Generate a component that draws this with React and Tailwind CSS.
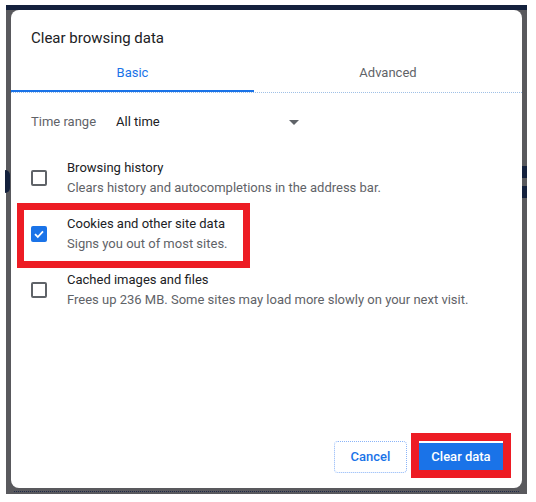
import React from "react";

function Checkbox({ checked }) {
  if (checked) {
    return (
      <div className="w-[16px] h-[16px] rounded-[2px] bg-[#1a73e8] flex items-center justify-center shrink-0">
        <svg width="12" height="12" viewBox="0 0 12 12">
          <path d="M2 6.2 L4.8 9 L10 3.4" fill="none" stroke="white" strokeWidth="1.8" />
        </svg>
      </div>
    );
  }
  return <div className="w-[16px] h-[16px] rounded-[2px] border-2 border-[#5f6368] shrink-0" />;
}

function Row({ checked, title, sub }) {
  return (
    <div className="flex items-center h-[40px] pl-[20px]">
      <Checkbox checked={checked} />
      <div className="ml-[20px] text-[13px] leading-[20px]">
        <div className="text-[#202124]">{title}</div>
        <div className="text-[#5f6368]">{sub}</div>
      </div>
    </div>
  );
}

export default function App() {
  return (
    <div className="w-[536px] h-[502px] bg-white pt-[5px] pl-[6px] font-['Roboto',sans-serif] overflow-hidden">
      <div className="relative w-[521px] h-[489px] bg-[#59595d] border-t-[5px] border-[#14213d] pl-[5px]">
        <div className="absolute left-[-1px] top-[160px] w-[5px] h-[23px] rounded-r-full bg-[#14213d]" />
        <div className="absolute right-0 top-[156px] w-[5px] h-[12px] bg-[#14213d]" />
        <div className="absolute right-0 top-[176px] w-[5px] h-[12px] bg-[#14213d]" />
        <div className="absolute left-[8px] right-[8px] top-[481px] border-t border-dotted border-[#1e2a48]" />
        <div className="relative w-[511px] h-[478px] bg-white rounded-[8px] flex flex-col">
          <div className="pl-[20px] pt-[18px] text-[15px] leading-[20px] text-[#202124]">Clear browsing data</div>
          <div className="flex border-b border-dotted border-[#9fc0e6]">
            <div className="w-[243px] pt-[17px] pb-[9px] text-center text-[13px] leading-[16px] text-[#1a73e8] border-b-2 border-[#1a73e8]">
              Basic
            </div>
            <div className="flex-1 pt-[17px] pb-[9px] text-center text-[13px] leading-[16px] text-[#5f6368] border-b-2 border-transparent">
              Advanced
            </div>
          </div>
          <div className="mt-[19px] flex items-center h-[20px] pl-[20px] text-[13px] leading-[20px]">
            <div className="w-[85px] text-[#5f6368]">Time range</div>
            <div className="w-[183px] flex items-center justify-between text-[#202124]">
              <span>All time</span>
              <span className="w-0 h-0 border-l-[5px] border-r-[5px] border-t-[5px] border-l-transparent border-r-transparent border-t-[#5f6368]" />
            </div>
          </div>
          <div className="mt-[26px] flex flex-col gap-[16px]">
            <Row checked={false} title="Browsing history" sub="Clears history and autocompletions in the address bar." />
            <Row checked={true} title="Cookies and other site data" sub="Signs you out of most sites." />
            <Row checked={false} title="Cached images and files" sub="Frees up 236 MB. Some sites may load more slowly on your next visit." />
          </div>
          <div className="mt-auto pb-[15px] pr-[19px] flex items-center justify-end gap-[12px]">
            <div className="w-[73px] h-[32px] rounded-[4px] border border-dotted border-[#8ab4f8] flex items-center justify-center text-[13px] font-medium text-[#1a73e8]">
              Cancel
            </div>
            <div className="w-[84px] h-[28px] bg-[#1a73e8] flex items-center justify-center text-[13px] font-medium text-white">
              Clear data
            </div>
          </div>
          <div className="absolute left-[6px] top-[193px] w-[233px] h-[65px] border-[7px] border-[#ed1c24]" />
          <div className="absolute left-[400px] top-[423px] w-[100px] h-[45px] border-[8px] border-[#ed1c24]" />
        </div>
      </div>
    </div>
  );
}
